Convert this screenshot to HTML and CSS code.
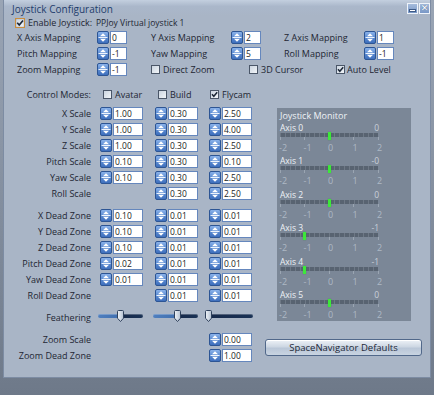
FILE: index.html
```html
<!DOCTYPE html>
<html>
<head>
<meta charset="utf-8">
<title>Joystick Configuration</title>
<link rel="stylesheet" href="styles.css">
</head>
<body>
<svg class="defs" width="0" height="0" aria-hidden="true">
  <defs>
    <linearGradient id="spg" x1="0" y1="0" x2="0" y2="1">
      <stop offset="0" stop-color="#8fb6ec"/>
      <stop offset="0.5" stop-color="#5b8bd2"/>
      <stop offset="1" stop-color="#3b6cba"/>
    </linearGradient>
    <linearGradient id="cbg" x1="0" y1="0" x2="1" y2="1">
      <stop offset="0" stop-color="#c9d3df"/>
      <stop offset="1" stop-color="#f4f7fa"/>
    </linearGradient>
    <linearGradient id="thg" x1="0" y1="0" x2="1" y2="0">
      <stop offset="0" stop-color="#f0f4f8"/>
      <stop offset="1" stop-color="#b4c1d2"/>
    </linearGradient>
    <symbol id="spin" viewBox="0 0 12 13">
      <rect x="0.5" y="0.5" width="11" height="12" rx="1.5" fill="url(#spg)" stroke="#2d5594"/>
      <path d="M1.5 6.5H10.5" stroke="#eef4fc" stroke-width="1"/>
      <path d="M3 5.2L6 2.3L9 5.2Z" fill="#ffffff"/>
      <path d="M3 7.8L6 10.7L9 7.8Z" fill="#ffffff"/>
    </symbol>
    <symbol id="cboff" viewBox="0 0 9 9">
      <rect x="0.5" y="0.5" width="8" height="8" fill="url(#cbg)" stroke="#4a5668"/>
    </symbol>
    <symbol id="cbon" viewBox="0 0 9 9">
      <rect x="0.5" y="0.5" width="8" height="8" fill="url(#cbg)" stroke="#4a5668"/>
      <path d="M2 4.3L3.8 6.3L7.2 2.2" fill="none" stroke="#1b2636" stroke-width="1.5"/>
    </symbol>
    <symbol id="thumb" viewBox="0 0 7 12">
      <path d="M0.5 1.5Q0.5 0.5 1.5 0.5H5.5Q6.5 0.5 6.5 1.5V8.2L3.5 11.5L0.5 8.2Z" fill="url(#thg)" stroke="#2f415c"/>
    </symbol>
  </defs>
</svg>

<div class="window">
  <div class="titlebar">
    <span class="title">Joystick Configuration</span>
    <div class="winbtns">
      <span class="wb"><span class="min"></span></span>
      <span class="wb"><span class="x">✕</span></span>
    </div>
  </div>

  <div class="top">
    <div class="enable">
      <svg class="cb cb-focus" viewBox="0 0 9 9"><use href="#cbon"/></svg>
      <span>Enable Joystick:</span>
    </div>
    <div class="device">PPJoy Virtual joystick 1</div>

    <span class="lbl">X Axis Mapping</span>
    <span class="field"><svg class="spin"><use href="#spin"/></svg><span class="box sm">0</span></span>
    <span class="lbl">Y Axis Mapping</span>
    <span class="field"><svg class="spin"><use href="#spin"/></svg><span class="box sm">2</span></span>
    <span class="lbl">Z Axis Mapping</span>
    <span class="field"><svg class="spin"><use href="#spin"/></svg><span class="box sm">1</span></span>

    <span class="lbl">Pitch Mapping</span>
    <span class="field"><svg class="spin"><use href="#spin"/></svg><span class="box sm">-1</span></span>
    <span class="lbl">Yaw Mapping</span>
    <span class="field"><svg class="spin"><use href="#spin"/></svg><span class="box sm">5</span></span>
    <span class="lbl">Roll Mapping</span>
    <span class="field"><svg class="spin"><use href="#spin"/></svg><span class="box sm">-1</span></span>

    <span class="lbl">Zoom Mapping</span>
    <span class="field"><svg class="spin"><use href="#spin"/></svg><span class="box sm">-1</span></span>
    <div class="opts">
      <span class="opt opt-a"><svg class="cb" viewBox="0 0 9 9"><use href="#cboff"/></svg>Direct Zoom</span>
      <span class="opt opt-b"><svg class="cb" viewBox="0 0 9 9"><use href="#cboff"/></svg>3D Cursor</span>
      <span class="opt opt-c"><svg class="cb" viewBox="0 0 9 9"><use href="#cbon"/></svg>Auto Level</span>
    </div>
  </div>

  <div class="main">
    <div class="left">
      <div class="grp">
        <span class="rl">Control Modes:</span>
        <span class="mode"><svg class="cb" viewBox="0 0 9 9"><use href="#cboff"/></svg>Avatar</span>
        <span class="mode"><svg class="cb" viewBox="0 0 9 9"><use href="#cboff"/></svg>Build</span>
        <span class="mode mode-fly"><svg class="cb" viewBox="0 0 9 9"><use href="#cbon"/></svg>Flycam</span>
      </div>

      <div class="grp grp-scale">
        <span class="rl">X Scale</span>
        <span class="field"><svg class="spin"><use href="#spin"/></svg><span class="box">1.00</span></span>
        <span class="field"><svg class="spin"><use href="#spin"/></svg><span class="box">0.30</span></span>
        <span class="field"><svg class="spin"><use href="#spin"/></svg><span class="box">2.50</span></span>

        <span class="rl">Y Scale</span>
        <span class="field"><svg class="spin"><use href="#spin"/></svg><span class="box">1.00</span></span>
        <span class="field"><svg class="spin"><use href="#spin"/></svg><span class="box">0.30</span></span>
        <span class="field"><svg class="spin"><use href="#spin"/></svg><span class="box">4.00</span></span>

        <span class="rl">Z Scale</span>
        <span class="field"><svg class="spin"><use href="#spin"/></svg><span class="box">1.00</span></span>
        <span class="field"><svg class="spin"><use href="#spin"/></svg><span class="box">0.30</span></span>
        <span class="field"><svg class="spin"><use href="#spin"/></svg><span class="box">2.50</span></span>

        <span class="rl">Pitch Scale</span>
        <span class="field"><svg class="spin"><use href="#spin"/></svg><span class="box">0.10</span></span>
        <span class="field"><svg class="spin"><use href="#spin"/></svg><span class="box">0.30</span></span>
        <span class="field"><svg class="spin"><use href="#spin"/></svg><span class="box">0.10</span></span>

        <span class="rl">Yaw Scale</span>
        <span class="field"><svg class="spin"><use href="#spin"/></svg><span class="box">0.10</span></span>
        <span class="field"><svg class="spin"><use href="#spin"/></svg><span class="box">0.30</span></span>
        <span class="field"><svg class="spin"><use href="#spin"/></svg><span class="box">2.50</span></span>

        <span class="rl">Roll Scale</span>
        <span></span>
        <span class="field"><svg class="spin"><use href="#spin"/></svg><span class="box">0.30</span></span>
        <span class="field"><svg class="spin"><use href="#spin"/></svg><span class="box">2.50</span></span>
      </div>

      <div class="grp grp-gap">
        <span class="rl">X Dead Zone</span>
        <span class="field"><svg class="spin"><use href="#spin"/></svg><span class="box">0.10</span></span>
        <span class="field"><svg class="spin"><use href="#spin"/></svg><span class="box">0.01</span></span>
        <span class="field"><svg class="spin"><use href="#spin"/></svg><span class="box">0.01</span></span>

        <span class="rl">Y Dead Zone</span>
        <span class="field"><svg class="spin"><use href="#spin"/></svg><span class="box">0.10</span></span>
        <span class="field"><svg class="spin"><use href="#spin"/></svg><span class="box">0.01</span></span>
        <span class="field"><svg class="spin"><use href="#spin"/></svg><span class="box">0.01</span></span>

        <span class="rl">Z Dead Zone</span>
        <span class="field"><svg class="spin"><use href="#spin"/></svg><span class="box">0.10</span></span>
        <span class="field"><svg class="spin"><use href="#spin"/></svg><span class="box">0.01</span></span>
        <span class="field"><svg class="spin"><use href="#spin"/></svg><span class="box">0.01</span></span>

        <span class="rl">Pitch Dead Zone</span>
        <span class="field"><svg class="spin"><use href="#spin"/></svg><span class="box">0.02</span></span>
        <span class="field"><svg class="spin"><use href="#spin"/></svg><span class="box">0.01</span></span>
        <span class="field"><svg class="spin"><use href="#spin"/></svg><span class="box">0.01</span></span>

        <span class="rl">Yaw Dead Zone</span>
        <span class="field"><svg class="spin"><use href="#spin"/></svg><span class="box">0.01</span></span>
        <span class="field"><svg class="spin"><use href="#spin"/></svg><span class="box">0.01</span></span>
        <span class="field"><svg class="spin"><use href="#spin"/></svg><span class="box">0.01</span></span>

        <span class="rl">Roll Dead Zone</span>
        <span></span>
        <span class="field"><svg class="spin"><use href="#spin"/></svg><span class="box">0.01</span></span>
        <span class="field"><svg class="spin"><use href="#spin"/></svg><span class="box">0.01</span></span>
      </div>

      <div class="grp grp-gap">
        <span class="rl">Feathering</span>
        <span class="slider" style="--p:50%"><span class="track"></span><svg class="thumb" viewBox="0 0 7 12"><use href="#thumb"/></svg></span>
        <span class="slider" style="--p:55%"><span class="track"></span><svg class="thumb" viewBox="0 0 7 12"><use href="#thumb"/></svg></span>
        <span class="slider slider-last" style="--p:7%"><span class="track"></span><svg class="thumb" viewBox="0 0 7 12"><use href="#thumb"/></svg></span>
      </div>

      <div class="grp grp-gap">
        <span class="rl">Zoom Scale</span>
        <span></span><span></span>
        <span class="field"><svg class="spin"><use href="#spin"/></svg><span class="box">0.00</span></span>

        <span class="rl">Zoom Dead Zone</span>
        <span></span><span></span>
        <span class="field"><svg class="spin"><use href="#spin"/></svg><span class="box">1.00</span></span>
      </div>
    </div>

    <div class="right">
      <div class="monitor">
        <div class="mon-title">Joystick Monitor</div>

        <div class="axis">
          <div class="axis-head"><span>Axis 0</span><span class="axis-val">0</span></div>
          <div class="bar"><span class="ind" style="left:50%"></span></div>
          <div class="ticks"></div>
          <div class="scale"><span>-2</span><span>-1</span><span>0</span><span>1</span><span>2</span></div>
        </div>
        <div class="axis">
          <div class="axis-head"><span>Axis 1</span><span class="axis-val">-0</span></div>
          <div class="bar"><span class="ind" style="left:50%"></span></div>
          <div class="ticks"></div>
          <div class="scale"><span>-2</span><span>-1</span><span>0</span><span>1</span><span>2</span></div>
        </div>
        <div class="axis">
          <div class="axis-head"><span>Axis 2</span><span class="axis-val">0</span></div>
          <div class="bar"><span class="ind" style="left:50%"></span></div>
          <div class="ticks"></div>
          <div class="scale"><span>-2</span><span>-1</span><span>0</span><span>1</span><span>2</span></div>
        </div>
        <div class="axis">
          <div class="axis-head"><span>Axis 3</span><span class="axis-val">-1</span></div>
          <div class="bar"><span class="ind" style="left:25%"></span></div>
          <div class="ticks"></div>
          <div class="scale"><span>-2</span><span>-1</span><span>0</span><span>1</span><span>2</span></div>
        </div>
        <div class="axis">
          <div class="axis-head"><span>Axis 4</span><span class="axis-val">-1</span></div>
          <div class="bar"><span class="ind" style="left:25%"></span></div>
          <div class="ticks"></div>
          <div class="scale"><span>-2</span><span>-1</span><span>0</span><span>1</span><span>2</span></div>
        </div>
        <div class="axis">
          <div class="axis-head"><span>Axis 5</span><span class="axis-val">0</span></div>
          <div class="bar"><span class="ind" style="left:50%"></span></div>
          <div class="ticks"></div>
          <div class="scale"><span>-2</span><span>-1</span><span>0</span><span>1</span><span>2</span></div>
        </div>
      </div>
      <button class="btn" type="button">SpaceNavigator Defaults</button>
    </div>
  </div>
</div>
</body>
</html>
```

FILE: styles.css
```css
* { box-sizing: border-box; }

html, body {
  margin: 0;
  padding: 0;
}

body {
  width: 434px;
  height: 395px;
  overflow: hidden;
  background: linear-gradient(#9aa5b5, #6e7989);
  font-family: "Open Sans", "DejaVu Sans", sans-serif;
  font-size: 9px;
  color: #1e2633;
}

.defs {
  position: absolute;
  width: 0;
  height: 0;
}

.window {
  margin-left: 3px;
  width: 428px;
  height: 378px;
  background: #a9b5c6;
  border: 1px solid #7d8ca3;
  border-top: none;
}

/* Title bar */
.titlebar {
  height: 16px;
  display: flex;
  justify-content: space-between;
  align-items: flex-start;
  padding: 0 0 0 8px;
  background: linear-gradient(#c3cfdf, #aab7ca 40%, #a9b5c6);
}

.title {
  font-size: 10px;
  line-height: 12px;
  margin-top: 3px;
  color: #1f3d6c;
}

.winbtns {
  display: flex;
  gap: 1px;
  margin-top: 3px;
}

.wb {
  width: 11px;
  height: 11px;
  border: 1px solid #eef3fa;
  background: linear-gradient(#a6bcdc, #7897c6);
  display: flex;
  align-items: center;
  justify-content: center;
  position: relative;
}

.min {
  width: 7px;
  height: 3px;
  margin-top: 4px;
  background: #ffffff;
  border: 1px solid #3e5a86;
}

.x {
  color: #ffffff;
  font-family: "DejaVu Sans", sans-serif;
  font-size: 9px;
  line-height: 9px;
  font-weight: bold;
  text-shadow: 0 0 1px #2f4d7c;
}

/* Top mapping block */
.top {
  display: grid;
  grid-template-columns: 80px 54px 80px 53px 80px 30px;
  grid-template-rows: 13px 16px 16px 16px;
  align-items: center;
  padding-left: 13px;
  white-space: nowrap;
}

.enable {
  display: flex;
  align-items: center;
  gap: 3px;
  margin-left: -2px;
}

.device {
  grid-column: 2 / -1;
  margin-left: -1px;
  font-size: 8.5px;
}

.opts {
  grid-column: 3 / -1;
  display: flex;
  align-items: center;
}

.opt {
  display: flex;
  align-items: center;
  gap: 3px;
}

.opt-a { width: 98px; }
.opt-b { width: 87px; }
.opt-c { gap: 2px; }

.cb {
  width: 9px;
  height: 9px;
  flex: none;
  display: block;
}

.cb-focus {
  width: 10px;
  height: 10px;
  outline: 1px solid #c98d3e;
  outline-offset: -1px;
}

.field {
  display: flex;
  align-items: center;
  gap: 1px;
}

.spin {
  width: 12px;
  height: 13px;
  flex: none;
  display: block;
}

.box {
  display: block;
  width: 30px;
  height: 13px;
  background: #ffffff;
  border: 1px solid #6587bd;
  padding-left: 1px;
  line-height: 11px;
  color: #1a1d24;
  font-size: 8.5px;
}

.box.sm {
  width: 17px;
}

/* Main area */
.main {
  display: flex;
  margin-top: 9px;
}

.left {
  width: 256px;
  flex: none;
}

.grp {
  display: grid;
  grid-template-columns: 96px 55px 54px 50px;
  grid-auto-rows: 16px;
  align-items: center;
  white-space: nowrap;
}

.grp-scale { margin-top: 3px; }
.grp-gap { margin-top: 6px; }

.rl {
  text-align: right;
  padding-right: 9px;
}

.mode {
  display: flex;
  align-items: center;
  gap: 3px;
  margin-left: 3px;
}

.mode-fly { margin-left: 1px; }

/* Sliders */
.slider {
  position: relative;
  display: block;
  width: 45px;
  height: 12px;
  margin-left: -2px;
  margin-bottom: 2px;
}

.slider-last {
  width: 48px;
  margin-left: -4px;
}

.track {
  position: absolute;
  left: 0;
  right: 0;
  top: 4px;
  height: 4px;
  border-radius: 2px;
  background: linear-gradient(to right, #4f7fbf 0, #3f6eae var(--p), #16294a var(--p), #1a3256 100%);
  box-shadow: inset 0 1px 0 rgba(255, 255, 255, 0.25);
}

.thumb {
  position: absolute;
  top: 0;
  left: calc(var(--p) - 3.5px);
  width: 7px;
  height: 12px;
}

/* Right column */
.right {
  margin-left: 5px;
  display: flex;
  flex-direction: column;
}

.monitor {
  margin-left: 12px;
  margin-top: 22px;
  width: 134px;
  height: 213px;
  overflow: hidden;
  background: #7b8797;
  padding: 2px 0 0 3px;
}

.mon-title {
  height: 13px;
  line-height: 12px;
  color: #eef2f6;
}

.axis {
  height: 33.4px;
  font-size: 8.5px;
}

.axis-head {
  width: 99px;
  height: 10px;
  line-height: 10px;
  display: flex;
  justify-content: space-between;
  color: #eef2f6;
}

.axis-val {
  color: #c9d0d9;
}

.bar {
  position: relative;
  width: 98px;
  height: 4px;
  background:
    repeating-linear-gradient(to right, rgba(150, 160, 172, 0.35) 0 1px, transparent 1px 4.9px),
    #586371;
}

.ticks {
  width: 99px;
  height: 3px;
  background: repeating-linear-gradient(to right, #9aa5b2 0 1px, transparent 1px 24.5px);
}

.ind {
  position: absolute;
  top: -1px;
  width: 3px;
  height: 8px;
  margin-left: -1.5px;
  background: #3de83a;
  box-shadow: 0 0 1px #1d8a1d;
}

.scale {
  display: flex;
  justify-content: space-between;
  width: 108px;
  margin-left: -1px;
  margin-top: 2px;
  height: 12px;
  line-height: 12px;
  color: #aeb8c5;
  font-size: 9px;
}

.scale span {
  width: 10px;
}

.btn {
  display: block;
  width: 157px;
  height: 17px;
  margin-top: 18px;
  padding: 0;
  border: 1px solid #51688a;
  border-radius: 3px;
  background: linear-gradient(#eef2f7, #cdd7e3 45%, #b9c6d7 55%, #c9d4e1);
  box-shadow: inset 0 1px 0 #ffffff;
  font-family: "Open Sans", "DejaVu Sans", sans-serif;
  font-size: 9.5px;
  line-height: 15px;
  color: #1d2938;
  text-align: center;
}
```
